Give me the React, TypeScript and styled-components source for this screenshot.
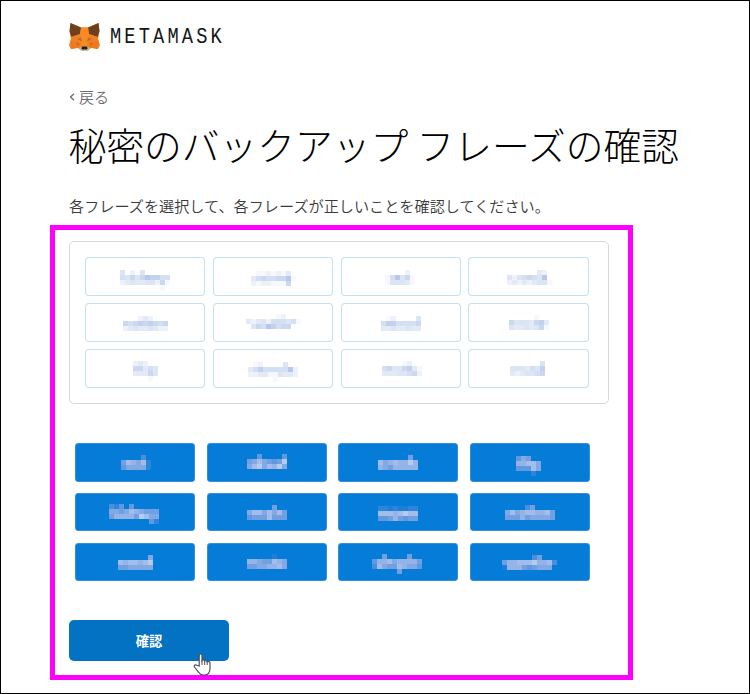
import React from 'react';
import styled, { createGlobalStyle, css } from 'styled-components';

const GlobalStyle = createGlobalStyle`
  *, *::before, *::after { box-sizing: border-box; }
  html, body { margin: 0; padding: 0; background: #fff; }
`;

const Page = styled.main`
  position: relative;
  width: 750px;
  height: 694px;
  padding: 18px 0 0 68px;
  border: 1px solid #000;
  background: #fff;
  color: #000;
  overflow: hidden;
  font-family: 'Noto Sans CJK JP', sans-serif;
`;

const Brand = styled.header`
  display: flex;
  align-items: center;
  gap: 10px;
  height: 34px;
`;

const FoxLogo = styled.svg`
  display: block;
  width: 31px;
  height: 30px;
`;

const Wordmark = styled.span`
  padding-top: 3px;
  font: 400 22px/34px 'Liberation Mono', monospace;
  letter-spacing: 3.7px;
  color: #161616;
  transform: scaleX(0.85);
  transform-origin: left center;
`;

const BackLink = styled.a`
  display: flex;
  align-items: center;
  gap: 4px;
  height: 22px;
  margin-top: 33px;
  color: #6a6d70;
  font-size: 15px;
  font-weight: 350;
  line-height: 22px;
`;

const Chevron = styled.svg`
  width: 6px;
  height: 8px;
  fill: none;
  stroke: currentColor;
  stroke-width: 1.3;
`;

const Title = styled.h1`
  margin: 9px 0 0 -0.5px;
  height: 54px;
  font-size: 37.75px;
  font-weight: 300;
  line-height: 54px;
  white-space: nowrap;
`;

const Description = styled.p`
  margin: 22px 0 0;
  height: 24px;
  color: #3a3a3a;
  font-size: 15.15px;
  font-weight: 350;
  line-height: 24px;
  white-space: nowrap;
`;

const SelectedPanel = styled.section`
  display: grid;
  grid-template-columns: repeat(4, 120.4px);
  grid-auto-rows: 39px;
  gap: 7px 7.4px;
  width: 540px;
  height: 163px;
  margin-top: 24px;
  padding: 15px;
  border: 1px solid #d8d8d8;
  border-radius: 5px;
`;

const ChoiceGrid = styled.section`
  display: grid;
  grid-template-columns: repeat(4, 120px);
  grid-auto-rows: 38.6px;
  gap: 11.1px 11.5px;
  margin: 39.2px 0 0 6px;
`;

const Chip = styled.div<{ $filled: boolean }>`
  border-radius: 4px;
  overflow: hidden;
  ${({ $filled }) =>
    $filled
      ? css`
          background: #047cd8;
          box-shadow: inset 0 0 0 0.5px #669fe0;
        `
      : css`
          background: #fff;
          box-shadow: inset 0 0 0 1px #c4dff3;
        `}
`;

const Mosaic = styled.svg`
  display: block;
  width: 120px;
  height: 38px;
  shape-rendering: crispEdges;
`;

const ConfirmButton = styled.button`
  display: block;
  width: 160px;
  height: 41px;
  margin-top: 39.2px;
  padding: 0;
  border: 0;
  border-radius: 5px;
  background: #0372c3;
  color: #fff;
  font: 700 13.3px/39px 'Noto Sans CJK JP', sans-serif;
`;

const Highlight = styled.div`
  position: absolute;
  left: 49px;
  top: 224px;
  width: 583px;
  height: 455px;
  border: 5px solid #f0f;
  pointer-events: none;
`;

const Pointer = styled.svg`
  position: absolute;
  left: 192px;
  top: 652px;
  width: 19px;
  height: 23px;
`;

type Pattern = { x: number; y: number; rows: string[] };

const LIGHT = ['', '#f6f8fd', '#edf1fa', '#e4e9f6', '#dbe5f4', '#d3dff2', '#cbd8f0', '#c2d2ee', '#b9c8ea', '#aebfe5'];
const DARK = ['', '#1c80da', '#2d85dc', '#4a8edd', '#6099e0', '#729fe0', '#82a9e3', '#94b3e7', '#a2bdea', '#b4ccf0'];

const selected: Pattern[] = [
  { x: 35, y: 13, rows: ['4.2.4.....', '5464687755', '2343344261', '........1.'] },
  { x: 38, y: 14, rows: ['.1121213.', '356556681', '21221116.'] },
  { x: 44, y: 13, rows: ['....2.', '158461', '144431'] },
  { x: 39, y: 13, rows: ['......32.', '42456548.', '232323441'] },
  { x: 38, y: 13, rows: ['...232...', '656767656', '234334322'] },
  { x: 33, y: 11, rows: ['......12...', '32342555451', '.46587566..'] },
  { x: 40, y: 13, rows: ['.12....4', '57755556', '33433433'] },
  { x: 41, y: 12, rows: ['.....1..', '64443673', '43343461'] },
  { x: 48, y: 12, rows: ['232..', '66354', '33364', '...1.'] },
  { x: 35, y: 13, rows: ['.12....4..', '3575555582', '2233114332', '.....1....'] },
  { x: 41, y: 12, rows: ['....12..', '56446731', '33344562'] },
  { x: 42, y: 12, rows: ['......4', '4443547', '3234456'] },
];

const choices: Pattern[] = [
  { x: 46, y: 12, rows: ['....3.', '587682', '466662'] },
  { x: 40, y: 11, rows: ['..4....4', '56865459', '68968796'] },
  { x: 40, y: 12, rows: ['......5.', '86787797', '76577777'] },
  { x: 46, y: 13, rows: ['465..', '77886', '44486', '...2.'] },
  { x: 34, y: 11, rows: ['324.4.....', '6656876555', '5777759866', '........42'] },
  { x: 40, y: 12, rows: ['.....5..', '68868685', '45558555'] },
  { x: 40, y: 13, rows: ['22121122', '88878988', '44575455'] },
  { x: 35, y: 12, rows: ['....35....', '6867887785', '5557566665'] },
  { x: 43, y: 12, rows: ['......6', '8788789', '5566666'] },
  { x: 40, y: 11, rows: ['.....1..', '77655876', '55667786'] },
  { x: 34, y: 11, rows: ['..5....5..', '4778677775', '3865587664', '.....5....'] },
  { x: 32, y: 12, rows: ['......35...', '57788897783', '1777545666.'] },
];

function Word({ pattern, filled = false }: { pattern: Pattern; filled?: boolean }) {
  const palette = filled ? DARK : LIGHT;
  return (
    <Chip $filled={filled}>
      <Mosaic viewBox="0 0 120 38">
        {pattern.rows.flatMap((row, r) =>
          [...row].map((level, c) =>
            level === '.' ? null : (
              <rect
                key={`${r}-${c}`}
                x={pattern.x + c * 5}
                y={pattern.y + r * 5}
                width="5"
                height="5"
                fill={palette[Number(level)]}
              />
            ),
          ),
        )}
      </Mosaic>
    </Chip>
  );
}

function Fox() {
  return (
    <FoxLogo viewBox="0 0 31 30">
      <path d="M1.500 2 12 6.500h7L29.500 2l1 9-1.500 7 2 6-2 4-7-1-3.500 3h-6L9 27l-7 1-2-4 2-6L.5 11z" fill="#f08422" />
      <path d="M1.500 2 12 6.500 11 13l-8.500 3L.5 10zM29.500 2 19 6.500 20 13l8.500 3 2-6z" fill="#6f401f" />
      <path d="m12 6.500-1 7.500 2 11h5l2-11-1-7.500z" fill="#f78c24" />
      <path d="m2.500 16 8.500-3-2 9H1zm26 0L20 13l2 9h8z" fill="#f08022" />
      <path d="m1 21 8-.5 3 5.500-10 2zm29 0-8-.5-3 5.500 10 2z" fill="#ec7a20" />
      <path d="m8 18 4-1.500 1 4zM23 18l-4-1.500-1 4z" fill="#b96b3c" />
      <path d="m7 22 4 .5-2 2zM24 22l-4 .5 2 2z" fill="#d9601d" />
      <path d="m10 27 3-1.500h5l3 1.500-2.500 3h-6z" fill="#cbbba9" />
      <path d="M13 25.500h5l.7 2-1 1h-4.400l-1-1z" fill="#25221f" />
    </FoxLogo>
  );
}

export default function App() {
  return (
    <>
      <GlobalStyle />
      <Page>
        <Brand>
          <Fox />
          <Wordmark>METAMASK</Wordmark>
        </Brand>
        <BackLink>
          <Chevron viewBox="0 0 6 8">
            <path d="M5 .8 1.500 4 5 7.200" />
          </Chevron>
          戻る
        </BackLink>
        <Title>秘密のバックアップ フレーズの確認</Title>
        <Description>各フレーズを選択して、各フレーズが正しいことを確認してください。</Description>
        <SelectedPanel>
          {selected.map((pattern, i) => (
            <Word key={i} pattern={pattern} />
          ))}
        </SelectedPanel>
        <ChoiceGrid>
          {choices.map((pattern, i) => (
            <Word key={i} pattern={pattern} filled />
          ))}
        </ChoiceGrid>
        <ConfirmButton>確認</ConfirmButton>
        <Highlight />
        <Pointer viewBox="0 0 19 23">
          <path
            d="M6.200 13V2.500c0-2 2.800-2 2.800 0v5c.8-1 2.500-.7 2.700.5.900-.9 2.300-.5 2.500.7 1.200-.7 2.800 0 2.800 1.500V15c0 4-2 7-5.500 7H10c-2 0-3.300-1-4.300-2.700L1.500 14c-1-1.700 1-2.900 2.300-1.700z"
            fill="#fff"
            stroke="#4b4f58"
            strokeWidth="1.200"
          />
          <path d="M9 7.500V12m2.700-4v4m2.500-3.300V12" fill="none" stroke="#4b4f58" />
        </Pointer>
      </Page>
    </>
  );
}
